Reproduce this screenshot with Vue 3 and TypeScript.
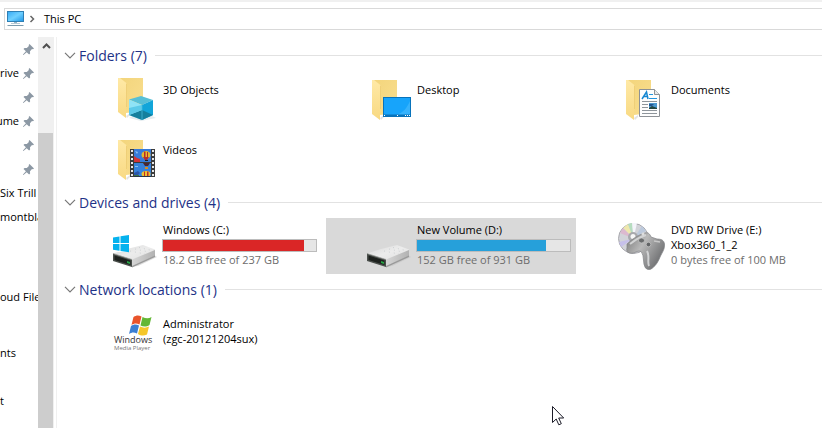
<script setup lang="ts">
import { ref } from 'vue'

type Icon = 'cube' | 'desktop' | 'document' | 'video' | 'windows' | 'drive' | 'disc' | 'player'

interface Item {
  name: string
  second?: string
  icon: Icon
  note?: string
  used?: number
  low?: boolean
}

interface Group {
  title: string
  count: number
  items: Item[]
}

interface TreeRow {
  label?: string
  pinned?: boolean
  edge?: boolean
  spaced?: boolean
}

const selected = ref('New Volume (D:)')
const closed = ref<string[]>([])

const groups: Group[] = [
  {
    title: 'Folders',
    count: 7,
    items: [
      { name: '3D Objects', icon: 'cube' },
      { name: 'Desktop', icon: 'desktop' },
      { name: 'Documents', icon: 'document' },
      { name: 'Videos', icon: 'video' },
    ],
  },
  {
    title: 'Devices and drives',
    count: 4,
    items: [
      { name: 'Windows (C:)', icon: 'windows', note: '18.2 GB free of 237 GB', used: 92, low: true },
      { name: 'New Volume (D:)', icon: 'drive', note: '152 GB free of 931 GB', used: 84 },
      { name: 'DVD RW Drive (E:)', second: 'Xbox360_1_2', icon: 'disc', note: '0 bytes free of 100 MB' },
    ],
  },
  {
    title: 'Network locations',
    count: 1,
    items: [{ name: 'Administrator', second: '(zgc-20121204sux)', icon: 'player' }],
  },
]

const tree: TreeRow[] = [
  { pinned: true },
  { pinned: true, label: 'rive' },
  { pinned: true },
  { pinned: true, label: 'ume' },
  { pinned: true },
  { pinned: true },
  { label: 'Six Trill' },
  { label: 'montbla', edge: true },
  { spaced: true },
  {},
  { label: 'oud File' },
  { spaced: true },
  { label: 'nts' },
  {},
  { label: 't' },
]

function toggle(title: string) {
  closed.value = closed.value.includes(title)
    ? closed.value.filter((t) => t !== title)
    : [...closed.value, title]
}
</script>

<template>
  <div class="explorer">
    <header class="top">
      <nav class="address">
        <svg class="pc" viewBox="0 0 17 16" aria-hidden="true">
          <defs>
            <linearGradient id="screen" x1="0" y1="0" x2="1" y2="1">
              <stop offset="0" stop-color="#35a9f5" />
              <stop offset=".5" stop-color="#6fd0ff" />
              <stop offset="1" stop-color="#1d96e8" />
            </linearGradient>
          </defs>
          <rect x="0.5" y="0.5" width="16" height="10" fill="url(#screen)" stroke="#2f7fb4" />
          <path d="M7 11h3v2h-3z" fill="#8fb4c9" />
          <path d="M4 12.5h9" stroke="#b7c9d3" />
          <path d="M0.500 14.5h16" stroke="#7c9bad" />
        </svg>
        <svg class="crumb" viewBox="0 0 6 8" aria-hidden="true"><path d="M1.500 1l3 3-3 3" /></svg>
        <button type="button" class="place">This PC</button>
      </nav>
    </header>

    <div class="body">
      <nav class="tree">
        <div v-for="(row, i) in tree" :key="i" class="row" :class="{ spaced: row.spaced, pinned: row.pinned }">
          <a v-if="row.label" href="#" class="label" :class="{ edge: row.edge }">{{ row.label }}</a>
          <svg v-if="row.pinned" class="pin" viewBox="0 0 11 11" aria-hidden="true">
            <path d="M6.500 0l4.500 4.500-1 .8-1-.2-2 2.100.1 2.300-1 1L3.700 8.200.4 11H0v-.5l2.900-3.200L.5 4.900l1-1 2.300.1 2.100-2-.2-1z" />
          </svg>
        </div>
      </nav>
      <div class="scroll">
        <button type="button" class="up" aria-label="Scroll up">
          <svg viewBox="0 0 9 6" aria-hidden="true"><path d="M1 5l3.500-3.500L8 5" /></svg>
        </button>
        <div class="thumb"></div>
      </div>

      <main class="content">
        <section v-for="group in groups" :key="group.title">
          <h2 class="heading">
            <button type="button" class="toggle" @click="toggle(group.title)">
              <svg class="chevron" viewBox="0 0 12 7" aria-hidden="true"><path d="M1 .8l5 5 5-5" /></svg>
              {{ group.title }} ({{ group.count }})
            </button>
          </h2>
          <div v-if="!closed.includes(group.title)" class="tiles">
            <button
              v-for="item in group.items"
              :key="item.name"
              type="button"
              class="tile"
              :class="{ selected: selected === item.name, tall: item.note }"
              @click="selected = item.name"
            >
              <svg class="icon" viewBox="0 0 48 48" aria-hidden="true">
                <defs>
                  <linearGradient :id="'back-' + item.icon" x1="0" y1="0" x2="1" y2="1">
                    <stop offset="0" stop-color="#f3d57c" />
                    <stop offset="1" stop-color="#f9de8f" />
                  </linearGradient>
                  <linearGradient :id="'flap-' + item.icon" x1="0" y1="0" x2="0" y2="1">
                    <stop offset="0" stop-color="#ffe9a6" />
                    <stop offset="1" stop-color="#f8d982" />
                  </linearGradient>
                  <linearGradient :id="'top-' + item.icon" x1="0" y1="0" x2="1" y2="1">
                    <stop offset="0" stop-color="#d8d8d8" />
                    <stop offset=".5" stop-color="#ececec" />
                    <stop offset="1" stop-color="#e0e0e0" />
                  </linearGradient>
                  <linearGradient :id="'side-' + item.icon" x1="0" y1="0" x2="1" y2="0">
                    <stop offset="0" stop-color="#d6d6d6" />
                    <stop offset="1" stop-color="#b2b2b2" />
                  </linearGradient>
                </defs>

                <g
                  v-if="['cube', 'desktop', 'document', 'video'].includes(item.icon)"
                  :transform="item.icon === 'cube' ? 'translate(0 -2)' : undefined"
                >
                  <path d="M16 43l4-3v2l-3 3z" fill="#e3e3e3" />
                  <path d="M10 5h23v33l-17 2z" :fill="`url(#back-${item.icon})`" />
                  <path d="M8 5h2l7 5.500V33l-1 2v10l-8-6z" :fill="`url(#flap-${item.icon})`" />
                  <path d="M16.500 10.500V34" stroke="#efcf78" />
                </g>

                <g v-if="item.icon === 'cube'">
                  <path d="M19 43l12 3 15-3-4-2H22z" fill="#e4ecef" />
                  <path d="M19 24.500L31 21l12 4-11 5z" fill="#57bfd6" />
                  <path d="M19 24.500L32 30v15l-13-5z" fill="#8fe3f6" />
                  <path d="M43 25L32 30v15l11-5z" fill="#12a5d9" />
                  <path d="M19 40l13-5 11 5-11 5z" fill="#147f9d" />
                  <path d="M19 33l13-3v5l-13 5z" fill="#5ccae9" />
                  <path d="M32 30v15" stroke="#48bede" stroke-width=".7" />
                </g>

                <g v-if="item.icon === 'desktop'">
                  <rect x="19.500" y="22.500" width="27" height="19" fill="#17a4fb" stroke="#0873bb" />
                  <path d="M46 26v14H32c7-2 11-7 14-14z" fill="#36b2fc" />
                  <path d="M20 40.500h26" stroke="#0873bb" stroke-width="2" />
                  <path d="M20 40.500h2m11 0h2m6 0h5" stroke="#fff" stroke-dasharray="1 1" />
                </g>

                <g v-if="item.icon === 'document'">
                  <path d="M21.500 14.500h15l5 5v22h-20z" fill="#fdfdfd" stroke="#8d9196" />
                  <path d="M36.500 14.500v5h5" fill="#e8e8e8" stroke="#8d9196" />
                  <path d="M24 24l4.500-7 1.500 7M25.500 21.500h4" fill="none" stroke="#1687d2" stroke-width="1.500" />
                  <path d="M31 19.500h4M31 23.500h8" stroke="#2396df" />
                  <path d="M24 26.500h15M24 29.500h6M24 32.500h6M24 35.500h15M24 38.500h15" stroke="#8e959b" />
                  <rect x="31" y="28" width="8" height="6" fill="#4b98cf" />
                  <path d="M31 33l3-2 5 2v1h-8z" fill="#23463f" />
                  <path d="M31 29h5l-2 2h-3z" fill="#24558d" />
                </g>

                <g v-if="item.icon === 'video'">
                  <rect x="20" y="14" width="25" height="28" fill="#3c3c3c" />
                  <path d="M22 15v27M43 15v27" stroke="#e8e8e8" stroke-width="2" stroke-dasharray="2 2" />
                  <rect x="24" y="14" width="17" height="13" fill="#367ad9" />
                  <rect x="24" y="28" width="17" height="14" fill="#3682db" />
                  <path d="M24 21l3 2 3 1v3h-6z" fill="#d23437" />
                  <path d="M25 16l3 1-1 2zM25 31h3v1h-3z" fill="#8bc1f2" />
                  <ellipse cx="36" cy="20" rx="4.500" ry="4" fill="#e5b92d" />
                  <path d="M34 16.500h1.500v6H34zM37 17h1v6h-1zM33 22h6l-2 3h-2z" fill="#b52c2c" />
                  <path d="M35 25h3v1h-3z" fill="#2a1c16" />
                  <path d="M33 28h7l-2 3h-3z" fill="#4a2731" />
                  <path d="M35 32h3v2h-3z" fill="#d88d23" />
                  <ellipse cx="36" cy="39" rx="4.500" ry="3" fill="#edc132" />
                  <path d="M34 36.500h1V42h-1zM37 36.500h1.500V42H37z" fill="#bf3029" />
                  <path d="M24 38l4-2 2 2-2 2h-4z" fill="#2a55a9" />
                  <path d="M24 40h5v2h-5z" fill="#3f7441" />
                  <path d="M24 41.500h17" stroke="#26354b" />
                </g>

                <g v-if="item.icon === 'windows' || item.icon === 'drive'">
                  <path d="M20 45l8-1 19-9-3-2z" fill="#bdbdbd" opacity=".5" />
                  <path d="M3 31.500L17 27l16-4 12 4.500V29L22 38z" :fill="`url(#top-${item.icon})`" />
                  <path d="M22 37.500L45 28v6L22 45z" :fill="`url(#side-${item.icon})`" />
                  <path d="M22 44L45 33.500V35L22 45.500z" fill="#9a9a9a" />
                  <path d="M3 31.500l19 6V45L3 39z" fill="#4a4f4b" />
                  <path d="M4.500 33.500l16 5v4.500l-16-5z" fill="#1d211e" />
                  <path d="M3 31.500l19 6" stroke="#9c9f9c" stroke-width=".7" />
                  <path d="M17 39l3 1v2l-3-1z" fill="#27a545" />
                  <path d="M25 27l14 3M20 29l15 3M29 25.500l13 3" stroke="#cdd0d2" stroke-dasharray="1 4" />
                  <g v-if="item.icon === 'windows'">
                    <path d="M3 13h16v17H3z" fill="#fff" />
                    <path d="M3 15.500l6.500-1V21H3zM10.500 14.300l8.500-1.300v8h-8.500zM3 22h6.500v6.800L3 27.700zM10.500 22H19v8.200l-8.500-1.300z" fill="#05b2ee" />
                  </g>
                </g>

                <g v-if="item.icon === 'disc'">
                  <defs>
                    <linearGradient id="pad" x1="0" y1="0" x2="1" y2=".6">
                      <stop offset="0" stop-color="#777" />
                      <stop offset=".45" stop-color="#b9b9b9" />
                      <stop offset="1" stop-color="#6d6e70" />
                    </linearGradient>
                  </defs>
                  <circle cx="15.500" cy="16.500" r="15" fill="#d2d3d9" stroke="#a8a8ad" />
                  <path d="M15.500 16.500L5 6l5-4z" fill="#eee8ad" />
                  <path d="M15.500 16.500L10 2l4-1z" fill="#b5ddbf" />
                  <path d="M15.500 16.500L2 11l3-5z" fill="#dcb9cf" />
                  <path d="M15.500 16.500L14 1h5z" fill="#f4f4fa" />
                  <path d="M15.500 16.500L1 20l2 5z" fill="#c6c0ea" />
                  <path d="M15.500 16.500L24 4l4 5z" fill="#bcc9dc" />
                  <circle cx="15" cy="15" r="5" fill="#a8a9ad" />
                  <circle cx="15" cy="14.500" r="2.500" fill="#f7f7f7" />
                  <path d="M9 22c5-5 11-9 18-11 3-1 5 1 6 4l6 2c4 0 7 1 7.500 5 .5 5-2 8-4 12-2 5-4 9-8 12-2 2-5 2-7 0-3-4-1-12-4-16-3-2-5 0-8 1-4 1-8-1-6.500-5z" fill="url(#pad)" stroke="#818285" stroke-width=".7" />
                  <path d="M12 22c5-4 10-7 16-9M29 29c3 5 0 11 2 15" fill="none" stroke="#d2d3d4" stroke-width="2" />
                  <ellipse cx="23.500" cy="18.500" rx="3" ry="2.500" fill="#6b6d6e" stroke="#ccc" stroke-width=".7" />
                  <circle cx="30.500" cy="22.500" r="2.300" fill="#626466" stroke="#c7c7c7" stroke-width=".7" />
                  <circle cx="25" cy="12" r="1.500" fill="#ddd" />
                  <path d="M36 19l6 1" stroke="#c8c8c8" stroke-width="1.500" />
                </g>

                <g v-if="item.icon === 'player'">
                  <path d="M23.500 8c3-2 5-2 8-.5l-2 8c-3-1.500-5-1.500-8 .5z" fill="#e9542b" />
                  <path d="M32.500 8c3 1.500 6 2 9 0l-2 8c-3 2-6 2-9 .5z" fill="#62b735" />
                  <path d="M21 17c3-2 5-2 8-.5l-2 8c-3-1.500-5-1.500-8 .5z" fill="#3b7ed2" />
                  <path d="M30 17.500c3 1.500 6 1.500 9 0l-2 8c-3 1.500-6 1.500-9-.5z" fill="#f5c72a" />
                  <text x="4" y="34" class="brand">Windows</text>
                  <text x="4" y="41" class="sub">Media Player</text>
                </g>
              </svg>
              <span class="info">
                <span class="line">{{ item.name }}</span>
                <span v-if="item.second" class="line">{{ item.second }}</span>
                <progress v-if="item.used" class="space" :class="{ low: item.low }" :value="item.used" max="100" :aria-label="item.note"></progress>
                <span v-if="item.note" class="line note">{{ item.note }}</span>
              </span>
            </button>
          </div>
        </section>
      </main>
    </div>

    <svg class="pointer" viewBox="0 0 12 20" aria-hidden="true">
      <path d="M.5.5v16l3.700-3.500 2.600 5.800 2.500-1.100-2.600-5.700h5z" />
    </svg>
  </div>
</template>

<style>
body {
  margin: 0;
  overflow: hidden;
}
</style>

<style scoped>
.explorer {
  display: flex;
  flex-direction: column;
  height: 100vh;
  overflow: hidden;
  background: #fff;
  color: #000;
  font: 11px/15px 'Open Sans', 'Noto Sans', sans-serif;
}
button {
  padding: 0;
  border: 0;
  background: none;
  color: inherit;
  font: inherit;
  text-align: left;
}
svg {
  display: block;
  flex: none;
}
.top {
  padding: 6px 0 7px 4px;
  border-top: 2px solid #f0f0f0;
}
.address {
  display: flex;
  align-items: center;
  height: 20px;
  border: 1px solid #d9d9d9;
  border-right: 0;
  padding-left: 2px;
}
.pc {
  width: 17px;
  height: 16px;
}
.crumb {
  width: 6px;
  height: 8px;
  margin: 0 9px 0 5px;
}
.crumb path {
  fill: none;
  stroke: #666;
  stroke-width: 1.5;
}
.place {
  padding-bottom: 2px;
}
.body {
  display: flex;
  flex: 1;
  min-height: 0;
}
.tree {
  width: 38px;
  overflow: hidden;
}
.row {
  display: flex;
  align-items: center;
  height: 24px;
}
.spaced {
  margin-top: 8px;
}
.label {
  padding-bottom: 2px;
  color: inherit;
  text-decoration: none;
  white-space: nowrap;
}
.pinned {
  justify-content: flex-end;
  gap: 4px;
  padding-right: 4px;
}
.edge {
  display: flex;
  flex: 0 0 38px;
  justify-content: flex-end;
}
.pin {
  width: 11px;
  height: 11px;
  fill: #8c98a4;
}
.scroll {
  display: flex;
  flex-direction: column;
  width: 16px;
  background: #f0f0f0;
}
.up {
  display: flex;
  justify-content: center;
  height: 96px;
  padding-top: 6px;
}
.up svg {
  width: 9px;
  height: 6px;
}
.up path {
  fill: none;
  stroke: #505050;
  stroke-width: 2;
}
.thumb {
  flex: 1;
  margin-right: 1px;
  background: #cdcdcd;
}
.content {
  flex: 1;
  min-width: 0;
  margin-left: 2px;
  padding: 3px 0 0 7px;
  border-left: 1px solid #f0f0f0;
  overflow: hidden;
}
.heading {
  display: flex;
  align-items: center;
  gap: 8px;
  height: 31px;
  margin: 0;
  color: #1e3287;
  font-size: 14px;
  font-weight: 400;
  line-height: 20px;
}
.heading::after {
  content: '';
  flex: 1;
  height: 1px;
  background: #e2e2e2;
}
.toggle {
  display: flex;
  align-items: center;
  gap: 3px;
}
.chevron {
  width: 12px;
  height: 7px;
}
.chevron path {
  fill: none;
  stroke: #777;
  stroke-width: 1.2;
}
.tiles {
  display: grid;
  grid-template-columns: repeat(3, 250px);
  gap: 4px;
  padding-left: 8px;
}
.tile {
  display: flex;
  align-items: flex-start;
  gap: 4px;
  height: 56px;
  padding: 4px 4px 4px 38px;
}
.selected {
  background: #d9d9d9;
}
.icon {
  width: 48px;
  height: 48px;
}
.info {
  display: flex;
  flex: 1;
  flex-direction: column;
  padding-top: 7px;
}
.tall .info {
  padding-top: 0;
}
.line {
  padding-left: 1px;
  white-space: nowrap;
}
.note {
  color: #6d6d6d;
}
.space {
  appearance: none;
  display: block;
  box-sizing: border-box;
  width: 155px;
  height: 13px;
  margin-top: 2px;
  border: 1px solid #bcbcbc;
  background: #e6e6e6;
}
.space::-webkit-progress-bar {
  background: #e6e6e6;
}
.space::-webkit-progress-value {
  background: #26a0da;
}
.low::-webkit-progress-value {
  background: #da2626;
}
.brand {
  fill: #333;
  font: 9px 'Open Sans', sans-serif;
}
.sub {
  fill: #777;
  font: 6px 'Open Sans', sans-serif;
}
.pointer {
  position: absolute;
  left: 552px;
  top: 406px;
  width: 12px;
  height: 20px;
}
.pointer path {
  fill: #fff;
  stroke: #1c1c28;
}
</style>
